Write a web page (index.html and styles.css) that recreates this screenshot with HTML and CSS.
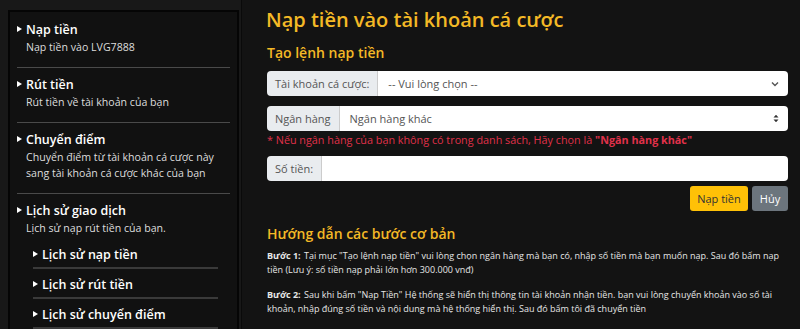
FILE: index.html
```html
<!DOCTYPE html>
<html lang="vi">
<head>
<meta charset="UTF-8">
<meta name="viewport" content="width=device-width, initial-scale=1.0">
<title>Nạp tiền</title>
<link rel="stylesheet" href="styles.css">
</head>
<body>
<div class="page">
  <div class="sidebar">
    <div class="menu-item">
      <div class="menu-title">Nạp tiền</div>
      <div class="menu-desc">Nạp tiền vào LVG7888</div>
    </div>
    <div class="menu-item">
      <div class="menu-title">Rút tiền</div>
      <div class="menu-desc">Rút tiền về tài khoản của bạn</div>
    </div>
    <div class="menu-item">
      <div class="menu-title">Chuyển điểm</div>
      <div class="menu-desc">Chuyển điểm từ tài khoản cá cược này sang tài khoản cá cược khác của bạn</div>
    </div>
    <div class="menu-item last">
      <div class="menu-title">Lịch sử giao dịch</div>
      <div class="menu-desc">Lịch sử nạp rút tiền của bạn.</div>
      <div class="sub-menu">
        <div class="sub-item">Lịch sử nạp tiền</div>
        <div class="sub-item">Lịch sử rút tiền</div>
        <div class="sub-item">Lịch sử chuyển điểm</div>
      </div>
    </div>
  </div>

  <div class="main">
    <h1>Nạp tiền vào tài khoản cá cược</h1>
    <h2>Tạo lệnh nạp tiền</h2>

    <div class="input-group">
      <span class="group-label">Tài khoản cá cược:</span>
      <div class="group-field">
        <span>-- Vui lòng chọn --</span>
        <svg class="chevron" width="8" height="6" viewBox="0 0 8 6"><path d="M1 1.5 L4 4.5 L7 1.5" fill="none" stroke="#555" stroke-width="1.4"/></svg>
      </div>
    </div>

    <div class="input-group">
      <span class="group-label">Ngân hàng</span>
      <div class="group-field">
        <span>Ngân hàng khác</span>
        <svg class="updown" width="6" height="9" viewBox="0 0 6 9"><path d="M0.5 3.5 L3 0.8 L5.5 3.5 Z M0.5 5.5 L3 8.2 L5.5 5.5 Z" fill="#333"/></svg>
      </div>
    </div>
    <p class="note">* Nếu ngân hàng của bạn không có trong danh sách, Hãy chọn là <b>"Ngân hàng khác"</b></p>

    <div class="input-group">
      <span class="group-label">Số tiền:</span>
      <div class="group-field"></div>
    </div>

    <div class="actions">
      <button class="btn btn-yellow">Nạp tiền</button>
      <button class="btn btn-gray">Hủy</button>
    </div>

    <h2 class="guide-title">Hướng dẫn các bước cơ bản</h2>
    <p class="step"><b>Bước 1:</b> Tại mục "Tạo lệnh nạp tiền" vui lòng chọn ngân hàng mà bạn có, nhập số tiền mà bạn muốn nạp. Sau đó bấm nạp tiền (Lưu ý: số tiền nạp phải lớn hơn 300.000 vnđ)</p>
    <p class="step"><b>Bước 2:</b> Sau khi bấm "Nạp Tiền" Hệ thống sẽ hiển thị thông tin tài khoản nhận tiền. bạn vui lòng chuyển khoản vào số tài khoản, nhập đúng số tiền và nội dung mà hệ thống hiển thị. Sau đó bấm tôi đã chuyển tiền</p>
  </div>
</div>
</body>
</html>
```

FILE: styles.css
```css
body {
    margin: 0;
    background-color: #181818;
    font-family: "Open Sans", "Noto Sans", sans-serif;
    color: #e6e6e6;
}

.page {
    display: flex;
    align-items: flex-start;
    height: 329px;
    overflow: hidden;
}

.sidebar {
    width: 213px;
    margin: 10px 0 0 8px;
    padding: 9px 7px 0 7px;
    background-color: #111;
    border: 2px solid #050505;
    border-bottom: none;
    flex-shrink: 0;
}

.menu-item {
    border-bottom: 1px solid #4a4a4a;
    padding: 0 0 12px 0;
    margin-bottom: 8px;
}

.menu-item.last {
    border-bottom: none;
}

.menu-title {
    font-size: 12.5px;
    font-weight: 600;
    color: #fff;
    line-height: 18px;
}

.menu-title::before,
.sub-item::before {
    content: "";
    display: inline-block;
    border-left: 5px solid #fff;
    border-top: 3px solid transparent;
    border-bottom: 3px solid transparent;
    margin-right: 4px;
    vertical-align: 2px;
}

.menu-desc {
    font-size: 10.6px;
    line-height: 16px;
    color: #ddd;
    padding-left: 9px;
    padding-right: 4px;
}

.sub-menu {
    margin: 10px 12px 0 16px;
}

.sub-item {
    font-size: 12.5px;
    font-weight: 600;
    color: #fff;
    line-height: 18px;
    padding-bottom: 3px;
    margin-bottom: 7px;
    border-bottom: 2px solid #3a3a3a;
}

.main {
    flex: 1;
    background-color: #131313;
    margin-left: 2px;
    padding: 0 12px 0 24px;
    height: 329px;
    border-left: 1px solid #0a0a0a;
}

h1 {
    margin: 4px 0 0 0;
    font-size: 20px;
    font-weight: 600;
    color: #f4b926;
    line-height: 32px;
}

h2 {
    margin: 6px 0 7px 1px;
    font-size: 14px;
    font-weight: 600;
    color: #f4b926;
    line-height: 22px;
}

.input-group {
    display: flex;
    height: 25px;
    margin-left: 1px;
    margin-bottom: 10px;
    border-radius: 4px;
    overflow: hidden;
    font-size: 11px;
}

.group-label {
    background-color: #e9ecef;
    color: #555;
    padding: 0 8px;
    display: flex;
    align-items: center;
    border-right: 1px solid #ccc;
}

.group-field {
    flex: 1;
    background-color: #fff;
    color: #555;
    display: flex;
    align-items: center;
    justify-content: space-between;
    padding: 0 9px 0 10px;
}

.note {
    margin: -10px 0 7px 1px;
    font-size: 10.8px;
    color: #e0314a;
    line-height: 18px;
}

.actions {
    display: flex;
    justify-content: flex-end;
    gap: 4px;
    margin-top: -5px;
}

.btn {
    font-family: "Open Sans", sans-serif;
    font-size: 11px;
    border: none;
    border-radius: 3px;
    height: 25px;
    padding: 0 7px;
    cursor: pointer;
}

.btn-yellow {
    background-color: #ffc107;
    color: #333;
    width: 58px;
}

.btn-gray {
    background-color: #6c757d;
    color: #fff;
    width: 36px;
}

.guide-title {
    margin: 12px 0 4px 1px;
}

.step {
    margin: 0 0 11px 1px;
    font-size: 9px;
    line-height: 14px;
    color: #e6e6e6;
}

.step b {
    margin-right: 1px;
}
```
